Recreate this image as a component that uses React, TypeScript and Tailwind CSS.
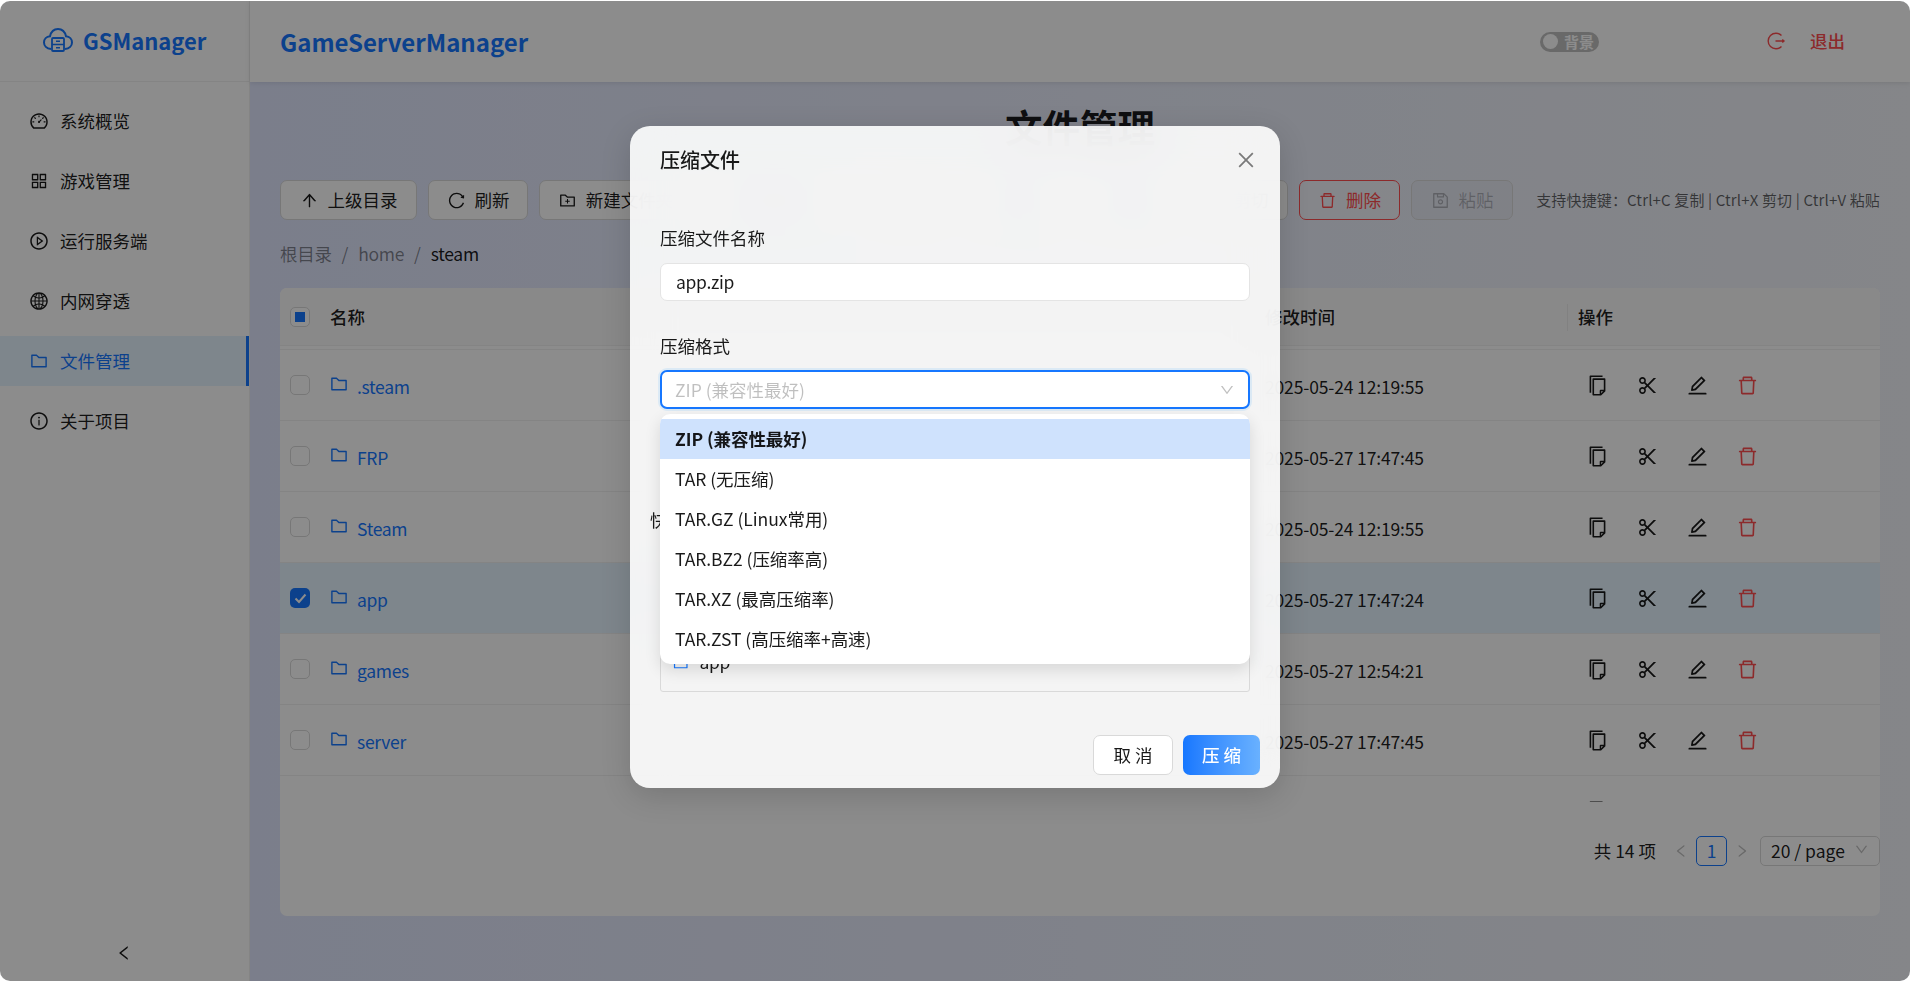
import React from "react";
import {
  AiOutlineDashboard, AiOutlineAppstore, AiOutlinePlayCircle, AiOutlineGlobal, AiOutlineFolder, AiOutlineInfoCircle,
  AiOutlineArrowUp, AiOutlineReload, AiOutlineFolderAdd, AiOutlineDelete, AiOutlineSave, AiOutlineCopy, AiOutlineScissor,
  AiOutlineEdit, AiOutlineLeft, AiOutlineRight, AiOutlineDown, AiOutlineClose, AiOutlineFileAdd, AiOutlineUpload, AiOutlineFileZip,
} from "react-icons/ai";

const menu = [
  { label: "系统概览", Icon: AiOutlineDashboard },
  { label: "游戏管理", Icon: AiOutlineAppstore },
  { label: "运行服务端", Icon: AiOutlinePlayCircle },
  { label: "内网穿透", Icon: AiOutlineGlobal },
  { label: "文件管理", Icon: AiOutlineFolder, active: true },
  { label: "关于项目", Icon: AiOutlineInfoCircle },
];

const rows = [
  { name: ".steam", time: "2025-05-24 12:19:55" },
  { name: "FRP", time: "2025-05-27 17:47:45" },
  { name: "Steam", time: "2025-05-24 12:19:55" },
  { name: "app", time: "2025-05-27 17:47:24", selected: true },
  { name: "games", time: "2025-05-27 12:54:21" },
  { name: "server", time: "2025-05-27 17:47:45" },
];

const options = ["ZIP (兼容性最好)", "TAR (无压缩)", "TAR.GZ (Linux常用)", "TAR.BZ2 (压缩率高)", "TAR.XZ (最高压缩率)", "TAR.ZST (高压缩率+高速)"];

function ToolButton({ icon, label, w, tone }: { icon: React.ReactNode; label: string; w: string; tone?: "danger" | "disabled" }) {
  const toneClass =
    tone === "danger"
      ? "border-[#ff4d4f] text-[#ff4d4f] bg-white/40"
      : tone === "disabled"
        ? "border-[#d9d9d9] text-black/25 bg-black/[0.02]"
        : "border-[#d9d9d9] text-black/90 bg-white";
  return (
    <div className={`flex h-10 shrink-0 items-center justify-center gap-[9px] rounded-[7px] border ${toneClass} ${w}`}>
      <span className="text-[19px]">{icon}</span>
      <span className="whitespace-nowrap">{label}</span>
    </div>
  );
}

function Actions() {
  return (
    <div className="flex items-center gap-[27px] pl-[8px] text-[23px]">
      <AiOutlineCopy className="-scale-x-100" />
      <AiOutlineScissor />
      <AiOutlineEdit />
      <AiOutlineDelete className="text-[#ff4d4f]" />
    </div>
  );
}

export default function App() {
  return (
    <div className="h-screen w-full overflow-hidden bg-white pt-px font-['Noto_Sans_CJK_SC','Noto_Sans',sans-serif] text-[17.5px] leading-[24px] text-black/90">
      <div className="relative flex h-[980px] overflow-hidden rounded-[10px]">
        <aside className="flex w-[250px] shrink-0 flex-col border-r border-[#f0f0f0] bg-white">
          <div className="flex h-[81px] shrink-0 items-center gap-[10px] border-b border-[#f0f0f0] pl-[43px] pb-[3px]">
            <svg width="30" height="24" viewBox="0 0 30 24" fill="none" stroke="#1677ff" strokeWidth="2">
              <path d="M8 21C3.500 20.500 1 17.500 1 14.500C1 11 3.500 8.500 7 8.300C8 4 11 1 15 1C19 1 22 4 23 8.300C26.500 8.500 29 11 29 14.500C29 17.500 26.500 20.500 22 21" />
              <rect x="9" y="10" width="12" height="13" rx="1" strokeWidth="1.800" />
              <path d="M9 16.500H21M13 13.300H17M13 19.800H17" strokeWidth="1.500" />
            </svg>
            <span className="text-[22px] font-bold text-[#1677ff]">GSManager</span>
          </div>
          <nav className="flex flex-col gap-[10px] pt-[14px]">
            {menu.map(({ label, Icon, active }) => (
              <div
                key={label}
                className={`flex h-[50px] items-center gap-[11px] pl-[29px] ${active ? "border-r-[3px] border-[#1677ff] bg-[#e6f4ff] text-[#1677ff]" : ""}`}
              >
                <Icon className="text-[20px]" />
                <span>{label}</span>
              </div>
            ))}
          </nav>
          <div className="mt-auto flex h-[56px] items-center justify-center pr-[1px]">
            <AiOutlineLeft className="text-[18px]" />
          </div>
        </aside>

        <main className="flex min-w-0 flex-1 flex-col bg-gradient-to-r from-[#e0e6fd] to-[#f2f4f9]">
          <header className="z-10 flex h-[81px] shrink-0 items-center bg-white pl-[30px] pr-[65px] shadow-[0_1px_5px_rgba(0,0,0,0.1)]">
            <span className="text-[24px] font-bold text-[#1677ff]">GameServerManager</span>
            <div className="ml-auto flex h-5 w-[59px] items-center rounded-full bg-black/25 pl-[3px] pr-[5px]">
              <span className="h-[15px] w-[15px] rounded-full bg-white" />
              <span className="ml-auto text-[15px] font-bold leading-5 text-white">背景</span>
            </div>
            <div className="ml-[167px] flex items-center gap-[24px] pb-[1px] text-[#ff4d4f]">
              <svg width="20" height="20" viewBox="0 0 20 20" fill="none" stroke="currentColor" strokeWidth="1.400">
                <path d="M15.500 4.500A7.800 7.800 0 1 0 15.500 15.500" />
                <path d="M9.500 10H18M16.300 8.500L18 10L16.300 11.500" />
              </svg>
              <span className="font-medium">退出</span>
            </div>
          </header>

          <div className="flex min-h-0 flex-1 flex-col px-[30px]">
            <h1 className="mt-[19px] h-[50px] text-center text-[37.5px] font-bold leading-[50px] text-black/90">文件管理</h1>
            <div className="mt-[29px] flex items-center gap-[11px]">
              <ToolButton icon={<AiOutlineArrowUp />} label="上级目录" w="w-[137px]" />
              <ToolButton icon={<AiOutlineReload />} label="刷新" w="w-[100px]" />
              <ToolButton icon={<AiOutlineFolderAdd />} label="新建文件夹" w="w-[153px]" />
              <ToolButton icon={<AiOutlineFileAdd />} label="新建文件" w="w-[136px]" />
              <ToolButton icon={<AiOutlineUpload />} label="上传" w="w-[101px]" />
              <ToolButton icon={<AiOutlineFileZip />} label="压缩" w="w-[101px]" />
              <ToolButton icon={<AiOutlineCopy />} label="复制" w="w-[101px]" />
              <ToolButton icon={<AiOutlineScissor />} label="剪切" w="w-[102px]" />
              <ToolButton icon={<AiOutlineDelete />} label="删除" w="w-[101px]" tone="danger" />
              <ToolButton icon={<AiOutlineSave />} label="粘贴" w="w-[102px]" tone="disabled" />
              <span className="ml-auto whitespace-nowrap text-[15px] tracking-[0.15px] text-black/60">支持快捷键：Ctrl+C 复制 | Ctrl+X 剪切 | Ctrl+V 粘贴</span>
            </div>
            <div className="mt-[19px] flex h-[30px] items-center gap-[10px] tracking-[-0.3px] text-black/45">
              <span>根目录</span>
              <span>/</span>
              <span>home</span>
              <span>/</span>
              <span className="text-black/90">steam</span>
            </div>

            <section className="mt-[19px] h-[628px] rounded-[7px] bg-white">
              <div className="grid h-[58px] grid-cols-[50px_935px_313px_1fr] items-center rounded-t-[7px] border-b border-[#f0f0f0] bg-[#fafafa] font-medium">
                <div className="pl-[10px]">
                  <div className="flex h-5 w-5 items-center justify-center rounded-[5px] border border-[#d9d9d9] bg-white">
                    <span className="h-[10px] w-[10px] bg-[#1677ff]" />
                  </div>
                </div>
                <div>名称</div>
                <div>修改时间</div>
                <div className="relative">
                  <span className="absolute -left-[11px] -top-[1px] h-[27px] w-px bg-[#ececec]" />
                  操作
                </div>
              </div>
              <div className="h-[4px] border-b border-[#f0f0f0]" />
              <div className="h-[452px] overflow-hidden">
                {rows.map((r) => (
                  <div
                    key={r.name}
                    className={`grid h-[71px] grid-cols-[50px_935px_313px_1fr] items-center border-b border-[#f0f0f0] ${r.selected ? "bg-[#e6f4ff]" : ""}`}
                  >
                    <div className="pl-[10px]">
                      {r.selected ? (
                        <div className="flex h-5 w-5 items-center justify-center rounded-[5px] bg-[#1677ff]">
                          <svg width="13" height="11" viewBox="0 0 13 11" fill="none" stroke="white" strokeWidth="2">
                            <path d="M1.500 5.500L5 9L11.500 1.500" />
                          </svg>
                        </div>
                      ) : (
                        <div className="h-5 w-5 rounded-[5px] border border-[#d9d9d9] bg-white" />
                      )}
                    </div>
                    <div className="flex items-center gap-[8px] text-[#1677ff]">
                      <AiOutlineFolder className="-ml-px -mt-[3px] text-[20px]" />
                      <span className="pt-[3px] tracking-[-0.3px]">{r.name}</span>
                    </div>
                    <div className="pt-[3px] tracking-[-0.15px]">{r.time}</div>
                    <Actions />
                  </div>
                ))}
                <div className="grid h-[71px] grid-cols-[50px_935px_313px_1fr] items-center">
                  <div className="pl-[10px]">
                    <div className="h-5 w-5 rounded-[5px] border border-[#d9d9d9] bg-white" />
                  </div>
                  <div />
                  <div />
                  <Actions />
                </div>
              </div>
              <div className="mt-[34px] flex h-[30px] items-center justify-end">
                <span className="mr-[17px] whitespace-nowrap">共 14 项</span>
                <AiOutlineLeft className="text-[16px] text-black/25" />
                <span className="ml-[7px] flex h-[30px] w-[31px] items-center justify-center rounded-[5px] border border-[#1677ff] text-[#1677ff]">1</span>
                <AiOutlineRight className="ml-[7px] text-[16px] text-black/25" />
                <div className="ml-[10px] flex h-[30px] w-[120px] items-center gap-[9px] rounded-[5px] border border-[#d9d9d9] pl-[10px]">
                  <span>20 / page</span>
                  <AiOutlineDown className="-mt-[3px] text-[15px] text-black/25" />
                </div>
              </div>
            </section>
          </div>
        </main>

        <div className="absolute inset-0 z-20 bg-black/45" />

        <div className="absolute left-[630px] top-[125px] z-30 h-[662px] w-[650px] rounded-[20px] bg-white/90 pt-[20px] pl-[30px] pr-[30px] shadow-[0_8px_30px_rgba(0,0,0,0.15)] backdrop-blur-[20px]">
          <div className="flex h-[28px] items-center justify-between">
            <span className="text-[20px] font-medium leading-[28px]">压缩文件</span>
            <AiOutlineClose className="-mr-[7px] text-[22px] text-black/50" />
          </div>
          <div className="mt-[52px]">压缩文件名称</div>
          <div className="mt-[13px] flex h-[38px] items-center rounded-[7px] border border-[#e4e4e4] bg-white pl-[15px] tracking-[-0.3px]">app.zip</div>
          <div className="mt-[33px]">压缩格式</div>
          <div className="mt-[12px] flex h-[39px] items-center justify-between rounded-[7px] border-2 border-[#1677ff] bg-white pl-[13px] pr-[13px] text-black/25 shadow-[0_0_0_2px_rgba(5,145,255,0.1)]">
            <span>ZIP (兼容性最好)</span>
            <AiOutlineDown className="text-[16px]" />
          </div>
          <div className="-ml-[10px] mt-[99px]">快速选择</div>
          <div className="mt-[112px] flex h-[48px] items-start gap-[10px] rounded-[3px] border border-[#d9d9d9] pl-[11px] pt-[5px]">
            <AiOutlineFolder className="mt-[4px] text-[17.5px] text-[#1677ff]" />
            <span className="tracking-[-0.3px]">app</span>
          </div>
          <div className="-mr-[10px] mt-[43px] flex justify-end gap-[10px]">
            <div className="flex h-10 w-[80px] items-center justify-center rounded-[7px] border border-[#d9d9d9] bg-white">取 消</div>
            <div className="flex h-10 w-[77px] items-center justify-center rounded-[7px] bg-gradient-to-r from-[#1677ff] to-[#69b1ff] font-medium text-white">压 缩</div>
          </div>

          <div className="absolute left-[30px] top-[288px] h-[250px] w-[590px] overflow-hidden rounded-[10px] bg-white py-[5px] shadow-[0_6px_16px_rgba(0,0,0,0.12)]">
            {options.map((o, i) => (
              <div key={o} className={`flex h-10 items-center pl-[15px] tracking-[-0.05px] ${i === 0 ? "bg-[#cfe2fd] font-semibold" : ""}`}>
                {o}
              </div>
            ))}
          </div>
        </div>
      </div>
    </div>
  );
}
